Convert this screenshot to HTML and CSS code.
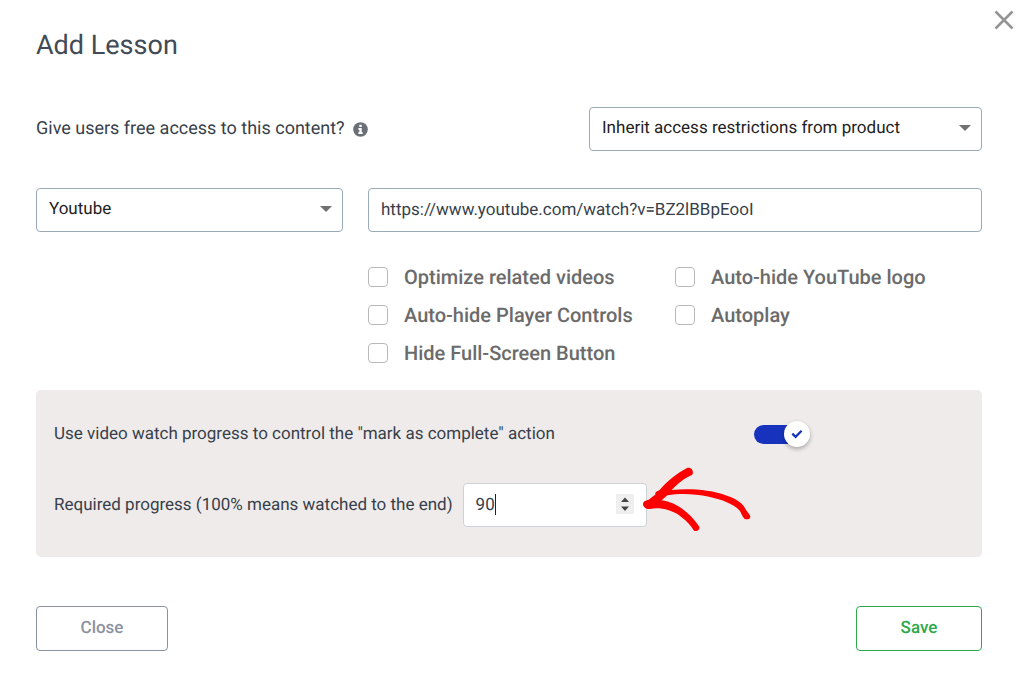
FILE: index.html
```html
<!DOCTYPE html>
<html lang="en">

<head>
    <meta charset="UTF-8">
    <meta name="viewport" content="width=device-width, initial-scale=1.0">
    <title>Add Lesson</title>
    <link rel="stylesheet" href="styles.css">
</head>

<body>
    <form class="lesson-form">
        <button type="button" class="dismiss" aria-label="Dismiss">
            <svg width="20" height="20" viewBox="0 0 20 20" aria-hidden="true">
                <path d="M1.5 1.5l17 17M18.5 1.5l-17 17" stroke="#959595" stroke-width="2.6" />
            </svg>
        </button>

        <h1>Add Lesson</h1>

        <div class="access-row">
            <label for="access">Give users free access to this content?</label>
            <svg class="info" width="15" height="15" viewBox="0 0 15 15" aria-hidden="true">
                <circle cx="7.5" cy="7.5" r="7.3" fill="#6a6f78" />
                <path d="M6.3 2.8h2.4v2.2H6.3zM5.4 6.1h3.3v4.2h1v1.7H5.3v-1.7h1V7.8h-.9z" fill="#fff" />
            </svg>
            <div class="select-box access-select">
                <select id="access">
                    <option>Inherit access restrictions from product</option>
                </select>
            </div>
        </div>

        <div class="video-grid">
            <div class="select-box">
                <select aria-label="Video source">
                    <option>Youtube</option>
                </select>
            </div>
            <input type="text" class="field" aria-label="Video URL" value="https://www.youtube.com/watch?v=BZ2lBBpEooI">

            <div class="options">
                <label><input type="checkbox"> Optimize related videos</label>
                <label><input type="checkbox"> Auto-hide YouTube logo</label>
                <label><input type="checkbox"> Auto-hide Player Controls</label>
                <label><input type="checkbox"> Autoplay</label>
                <label><input type="checkbox"> Hide Full-Screen Button</label>
            </div>
        </div>

        <div class="progress-panel">
            <div class="toggle-row">
                <label for="watch">Use video watch progress to control the "mark as complete" action</label>
                <div class="toggle">
                    <input type="checkbox" id="watch" checked>
                    <span class="knob">
                        <svg width="12" height="10" viewBox="0 0 12 10" aria-hidden="true">
                            <path d="M1.3 4.6l3.3 3.2 6-6" fill="none" stroke="#1733bd" stroke-width="2.3" />
                        </svg>
                    </span>
                </div>
            </div>
            <div class="required-row">
                <label for="required">Required progress (100% means watched to the end)</label>
                <div class="number-box">
                    <input type="number" id="required" class="field" value="90">
                    <span class="caret"></span>
                    <svg class="spinner" width="18" height="20" viewBox="0 0 18 20" aria-hidden="true">
                        <path d="M0 0h18v20H0z" fill="#efefef" />
                        <path d="M5 8l4-4.5L13 8zM5 12.5l4 4.5 4-4.5z" fill="#444" />
                    </svg>
                    <svg class="arrow" width="114" height="69" viewBox="600 15 342 207" aria-hidden="true">
                        <path d="M609 132C609 125 615 121 626 119C634 113 639 108 646 104C644 98 649 94 658 91C679 66 710 40 741 24C752 20 763 32 757 44C737 53 717 66 695 90C750 85 810 89 861 107C892 117 911 132 918 150C923 157 930 164 931 170C930 178 921 180 913 176C905 167 904 160 900 153C883 133 849 119 807 110C763 101 720 99 682 106L665 121C711 127 752 161 778 200C780 210 771 216 762 212C754 199 741 184 724 171C696 149 661 141 630 147C618 148 609 141 609 132Z" fill="#fe0000" />
                    </svg>
                </div>
            </div>
        </div>

        <div class="actions">
            <button type="button" class="btn btn-close">Close</button>
            <button type="submit" class="btn btn-save">Save</button>
        </div>
    </form>
</body>

</html>
```
FILE: styles.css
```css
* {
    box-sizing: border-box;
}

body {
    margin: 0;
    font-family: Roboto, 'Liberation Sans', sans-serif;
    font-size: 17px;
    line-height: 24px;
    color: #373f4b;
    background-color: #fff;
    text-rendering: geometricPrecision;
}

.lesson-form {
    position: relative;
    padding: 29px 42px 24px 36px;
}

.dismiss {
    position: absolute;
    top: 10px;
    right: 10px;
    padding: 0;
    border: none;
    background: none;
    cursor: pointer;
}

.dismiss svg {
    display: block;
}

h1 {
    margin: 0 0 46px;
    font-size: 27px;
    line-height: 32px;
    font-weight: 400;
    color: #424a56;
}

select,
.field {
    width: 100%;
    height: 44px;
    padding: 0 12px;
    border: 1px solid #9aa9b7;
    border-radius: 4px;
    background-color: #fff;
    font-family: inherit;
    font-size: 17px;
    color: #373f4b;
    text-rendering: inherit;
    outline: none;
}

select {
    appearance: none;
    padding-bottom: 2px;
    color: #222;
}

.select-box {
    position: relative;
}

.select-box::after {
    content: "";
    position: absolute;
    top: 18px;
    right: 11px;
    border: 6px solid transparent;
    border-top-color: #717171;
    border-bottom: none;
    pointer-events: none;
}

.access-row {
    display: flex;
    align-items: center;
    margin-bottom: 37px;
    font-size: 18px;
}

.info {
    margin-left: 8px;
}

.access-select {
    width: 393px;
    margin-left: auto;
}

.video-grid {
    display: grid;
    grid-template-columns: 1fr 2fr;
    column-gap: 25px;
    row-gap: 32px;
}

.options {
    grid-column: 2;
    display: grid;
    grid-template-columns: 1fr 1fr;
    row-gap: 12px;
}

.options label {
    display: flex;
    align-items: center;
    gap: 16px;
    height: 26px;
    font-size: 20px;
    font-weight: 500;
    color: #6b6b6b;
}

.options input {
    appearance: none;
    width: 20px;
    height: 20px;
    margin: 0;
    border: 1px solid #b9b9b9;
    border-radius: 4px;
    background-color: #fff;
}

.progress-panel {
    margin-top: 24px;
    padding: 30px 18px;
    border-radius: 5px;
    background-color: #efebea;
}

.toggle-row {
    display: grid;
    grid-template-columns: 1fr 210px;
    align-items: center;
    margin-bottom: 35px;
}

.toggle {
    position: relative;
    width: 56px;
    height: 28px;
    display: flex;
    align-items: center;
}

.toggle input {
    appearance: none;
    width: 50px;
    height: 19px;
    margin: 0;
    border-radius: 10px;
    background-color: #1733bd;
}

.knob {
    position: absolute;
    top: 1px;
    right: 0;
    width: 26px;
    height: 26px;
    display: flex;
    align-items: center;
    justify-content: center;
    border-radius: 50%;
    background-color: #fff;
    box-shadow: 0 2px 4px rgba(0, 0, 0, 0.3);
    pointer-events: none;
}

.required-row {
    display: flex;
    align-items: center;
    gap: 10px;
}

.number-box {
    position: relative;
    width: 184px;
}

.number-box .field {
    display: block;
    border-color: #ccd2d8;
    appearance: textfield;
}

.number-box .field::-webkit-inner-spin-button {
    appearance: none;
}

.caret {
    position: absolute;
    top: 11px;
    left: 32px;
    width: 1px;
    height: 21px;
    background-color: #222;
}

.spinner {
    position: absolute;
    top: 11px;
    right: 13px;
}

.arrow {
    position: absolute;
    top: -18px;
    left: 177px;
}

.actions {
    display: flex;
    justify-content: space-between;
    margin-top: 49px;
}

.btn {
    height: 45px;
    padding-bottom: 2px;
    border: 1px solid;
    border-radius: 4px;
    background-color: #fff;
    font-family: inherit;
    font-size: 17px;
    font-weight: 500;
    text-rendering: inherit;
    cursor: pointer;
}

.btn-close {
    width: 132px;
    border-color: #8a91a2;
    color: #8c929f;
}

.btn-save {
    width: 126px;
    border-color: #2fa84a;
    color: #2fa84a;
}
```
